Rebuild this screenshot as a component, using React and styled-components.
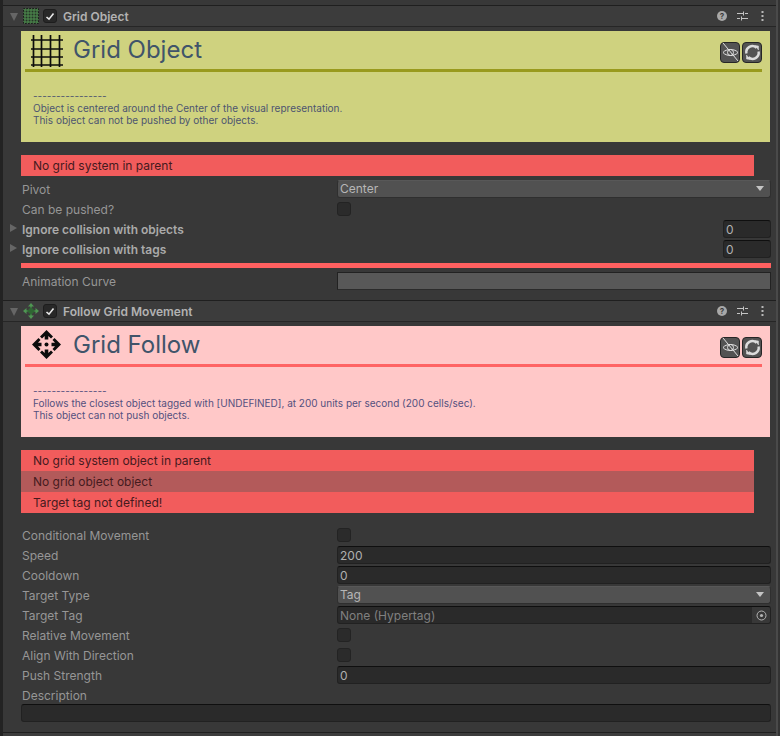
import React from "react";
import styled, { createGlobalStyle } from "styled-components";

const GlobalStyle = createGlobalStyle`
  html, body {
    margin: 0;
    background: #383838;
  }
  * {
    box-sizing: border-box;
  }
`;

const Page = styled.div`
  width: 780px;
  height: 736px;
  overflow: hidden;
  display: flex;
  background: #383838;
  font-family: Inter, "Noto Sans", sans-serif;
  font-size: 12px;
  color: #a6a6a6;
`;

const LeftEdge = styled.div`
  width: 3px;
  flex: none;
  background: #232323;
`;

const Inspector = styled.div`
  width: 773px;
  flex: none;
  padding-top: 5px;
`;

const ScrollEdge = styled.div`
  width: 4px;
  flex: none;
  display: flex;
  justify-content: flex-start;
  background: #333333;

  &::before {
    content: "";
    width: 2px;
    background: #4a4a4a;
  }
`;

const Header = styled.div`
  height: 22px;
  display: flex;
  align-items: center;
  padding-left: 7px;
  background: #3c3c3c;
  border-top: 1px solid #1f1f1f;
  border-bottom: 1px solid #262626;
`;

const Fold = styled.span`
  width: 0;
  height: 0;
  margin: 1px 5px 0 0;
  border-left: 4px solid transparent;
  border-right: 4px solid transparent;
  border-top: 8px solid #666666;
`;

const SmallIcon = styled.svg`
  width: 16px;
  height: 16px;
  margin-right: 4px;
`;

const Check = styled.span`
  width: 14px;
  height: 14px;
  flex: none;
  display: flex;
  align-items: center;
  justify-content: center;
  background: #282828;
  border: 1px solid #1d1d1d;
  border-radius: 3px;
`;

const HeaderTitle = styled.span`
  margin-left: 6px;
  font-weight: 600;
  color: #b2b2b2;
  flex: 1;
`;

const HeaderTools = styled.div`
  display: flex;
  align-items: center;
  gap: 10px;
  padding-right: 12px;
`;

const MenuSlot = styled.span`
  display: flex;
  margin-left: 3px;
`;

const Body = styled.div`
  padding: 4px 0 0 18px;
  height: ${({ $height }) => $height}px;
  display: flex;
  flex-direction: column;
`;

const Banner = styled.div`
  width: 749px;
  height: 111px;
  flex: none;
  padding: 0 8px 0 4px;
  background: ${({ $bg }) => $bg};
  color: ${({ $text }) => $text};
  font-size: 10px;
  line-height: 12px;
`;

const BannerTop = styled.div`
  height: 38px;
  display: flex;
  align-items: center;
`;

const BannerIcon = styled.svg`
  width: 34px;
  height: 34px;
  margin-left: 5px;
  flex: none;
`;

const BannerTitle = styled.div`
  margin-left: 9px;
  flex: 1;
  font-size: 24px;
  line-height: 38px;
  color: #40546a;
`;

const BannerButtons = styled.div`
  display: flex;
  gap: 2px;
  margin-top: 4px;
`;

const SquareButton = styled.div`
  width: 20px;
  height: 21px;
  display: flex;
  align-items: center;
  justify-content: center;
  background: #535353;
  border: 1px solid #262626;
  border-radius: 4px;
`;

const BannerRule = styled.div`
  height: 3px;
  background: ${({ $color }) => $color};
`;

const BannerText = styled.div`
  padding: 18px 0 0 8px;
`;

const Errors = styled.div`
  width: 733px;
  margin-top: 13px;
  flex: none;
  display: flex;
  flex-direction: column;
`;

const ErrorRow = styled.div`
  height: 21px;
  line-height: 21px;
  padding-left: 12px;
  color: #451a1e;
  background: ${({ $dim }) => ($dim ? "#b35a5a" : "#f25c5c")};
`;

const Fields = styled.div`
  width: 750px;
  margin-top: ${({ $top }) => $top}px;
  flex: none;
  display: flex;
  flex-direction: column;
`;

const Row = styled.div`
  height: 20px;
  display: flex;
  align-items: center;
  position: relative;
`;

const Label = styled.span`
  width: 316px;
  flex: none;
  padding-left: 1px;
  font-weight: ${({ $bold }) => ($bold ? 600 : 400)};
  color: ${({ $bold }) => ($bold ? "#aaaaaa" : "#969696")};
`;

const Arrow = styled.span`
  position: absolute;
  left: -11px;
  top: 5px;
  width: 0;
  height: 0;
  border-top: 4px solid transparent;
  border-bottom: 4px solid transparent;
  border-left: 7px solid #666666;
`;

const Control = styled.div`
  flex: 1;
  display: flex;
  justify-content: ${({ $end }) => ($end ? "flex-end" : "flex-start")};
`;

const Checkbox = styled.span`
  width: 14px;
  height: 14px;
  background: #2b2b2b;
  border: 1px solid #232323;
  border-radius: 3px;
`;

const Input = styled.div`
  width: ${({ $width }) => $width || "100%"};
  height: 18px;
  line-height: 17px;
  padding-left: 2px;
  display: flex;
  justify-content: space-between;
  background: #2a2a2a;
  border: 1px solid #212121;
  border-top-color: #0f0f0f;
  border-radius: 3px;
  color: ${({ $dim }) => ($dim ? "#808080" : "#b0b0b0")};
  overflow: hidden;
`;

const Picker = styled.span`
  width: 18px;
  margin: -1px 0;
  display: flex;
  align-items: center;
  justify-content: center;
  background: #383838;
`;

const Select = styled.div`
  width: 100%;
  height: 18px;
  line-height: 15px;
  padding: 0 6px 1px 2px;
  display: flex;
  align-items: center;
  justify-content: space-between;
  background: #515151;
  border: 1px solid #2f2f2f;
  border-top-color: #585858;
  border-radius: 3px;
  color: #b6b6b6;
`;

const Caret = styled.span`
  width: 0;
  height: 0;
  border-left: 4px solid transparent;
  border-right: 4px solid transparent;
  border-top: 5px solid #c4c4c4;
`;

const RedRule = styled.div`
  width: 750px;
  height: 5px;
  margin-top: 4px;
  flex: none;
  background: #ff6060;
`;

const CurveBox = styled.div`
  width: 100%;
  height: 18px;
  background: #585858;
  border: 1px solid #222222;
  border-bottom-color: #2b2b2b;
`;

const WideInput = styled(Input)`
  width: 750px;
  margin-top: -1px;
  flex: none;
`;

const HelpIcon = () => (
  <svg width="10" height="10" viewBox="0 0 10 10">
    <circle cx="5" cy="5" r="5" fill="#a8a8a8" />
    <text x="5" y="8" textAnchor="middle" fontSize="8" fontWeight="700" fontFamily="Inter" fill="#3c3c3c">?</text>
  </svg>
);

const PresetIcon = () => (
  <svg width="11" height="10" viewBox="0 0 11 10" stroke="#c4c4c4" strokeWidth="1" fill="none">
    <path d="M0 2.5H6M8 2.5H11M0 7.5H3M5 7.5H11M6.5 0.5V4.5M4.5 5.5V9.5" />
  </svg>
);

const MenuIcon = () => (
  <svg width="3" height="10" viewBox="0 0 3 10" fill="#b8b8b8">
    <rect x="0.5" y="0" width="2" height="2" />
    <rect x="0.5" y="4" width="2" height="2" />
    <rect x="0.5" y="8" width="2" height="2" />
  </svg>
);

const Tick = () => (
  <svg width="10" height="9" viewBox="0 0 10 9" fill="none" stroke="#e8e8e8" strokeWidth="1.6">
    <path d="M1.5 5L4 7.2L8.5 1.5" />
  </svg>
);

const GridTiny = () => (
  <SmallIcon viewBox="0 0 16 16">
    <rect x="0.5" y="0.5" width="15" height="15" fill="#263327" />
    <path d="M0 2H16M0 5H16M0 8H16M0 11H16M0 14H16M2 0V16M5 0V16M8 0V16M11 0V16M14 0V16" stroke="#4e8f50" strokeWidth="1" />
    <path d="M0.5 0.5H15.5V15.5H0.5Z" fill="none" stroke="#1c1c1c" strokeWidth="1" strokeDasharray="1.5 1.5" />
  </SmallIcon>
);

const MoveTiny = () => (
  <SmallIcon viewBox="0 0 16 16">
    <path d="M8 1V15M1 8H15" stroke="#4a8f4e" strokeWidth="1.6" />
    <path d="M8 0L11 3.5H5ZM8 16L11 12.5H5ZM0 8L3.5 5V11ZM16 8L12.5 5V11Z" fill="#4f9653" />
    <path d="M8 4L12 8L8 12L4 8Z" fill="#2f6633" />
  </SmallIcon>
);

const GridLarge = () => (
  <BannerIcon viewBox="0 0 34 34" fill="none" stroke="#0c0c0c" strokeWidth="1.7">
    <path d="M1 7H33M1 16H33M1 24H33M1 32H33M3.5 2V34M11.5 2V34M20.5 2V34M29.5 2V34" />
  </BannerIcon>
);

const MoveLarge = () => (
  <BannerIcon viewBox="0 0 34 34" fill="#0c0c0c">
    <circle cx="16.5" cy="16.5" r="2" />
    <path d="M16.5 2L23 8.5L21 10.5L18.3 8V11.5H14.7V8L12 10.5L10 8.5Z" />
    <path d="M16.5 31L23 24.5L21 22.5L18.3 25V21.5H14.7V25L12 22.5L10 24.5Z" />
    <path d="M2 16.5L8.5 10L10.5 12L8 14.7H11.5V18.3H8L10.5 21L8.5 23Z" />
    <path d="M31 16.5L24.5 10L22.5 12L25 14.7H21.5V18.3H25L22.5 21L24.5 23Z" />
  </BannerIcon>
);

const HideSvg = styled.svg`
  overflow: visible;
`;

const HideIcon = () => (
  <HideSvg width="17" height="17" viewBox="0 0 17 17" fill="none" stroke="#e2e2e2" strokeWidth="1">
    <path d="M1 8.5C4 4.5 13 4.5 16 8.5C13 12.5 4 12.5 1 8.5Z" />
    <circle cx="8.5" cy="8.5" r="3" />
    <path d="M1 -1L16 17" />
  </HideSvg>
);

const RefreshIcon = () => (
  <svg width="17" height="17" viewBox="0 0 17 17" fill="none" stroke="#dcdcdc" strokeWidth="2.4">
    <path d="M2.5 9.5A6 6 0 0 1 12.5 3.8" />
    <path d="M14.5 7.5A6 6 0 0 1 4.5 13.2" />
    <path d="M11 1.5L14.5 2V6ZM6 15.5L2.5 15V11Z" fill="#dcdcdc" strokeWidth="0.5" />
  </svg>
);

const TargetIcon = () => (
  <svg width="11" height="11" viewBox="0 0 11 11" fill="none" stroke="#b4b4b4">
    <circle cx="5.5" cy="5.5" r="4.5" />
    <circle cx="5.5" cy="5.5" r="1.6" fill="#b4b4b4" stroke="none" />
  </svg>
);

const ComponentHeader = ({ icon, title }) => (
  <Header>
    <Fold />
    {icon}
    <Check>
      <Tick />
    </Check>
    <HeaderTitle>{title}</HeaderTitle>
    <HeaderTools>
      <HelpIcon />
      <PresetIcon />
      <MenuSlot>
        <MenuIcon />
      </MenuSlot>
    </HeaderTools>
  </Header>
);

const InfoBanner = ({ bg, rule, text, icon, title, lines }) => (
  <Banner $bg={bg} $text={text}>
    <BannerTop>
      {icon}
      <BannerTitle>{title}</BannerTitle>
      <BannerButtons>
        <SquareButton>
          <HideIcon />
        </SquareButton>
        <SquareButton>
          <RefreshIcon />
        </SquareButton>
      </BannerButtons>
    </BannerTop>
    <BannerRule $color={rule} />
    <BannerText>
      <div>----------------</div>
      {lines.map((line) => (
        <div key={line}>{line}</div>
      ))}
    </BannerText>
  </Banner>
);

const Field = ({ label, bold, children, end }) => (
  <Row>
    {bold && <Arrow />}
    <Label $bold={bold}>{label}</Label>
    <Control $end={end}>{children}</Control>
  </Row>
);

const App = () => {
  return (
    <Page>
      <GlobalStyle />
      <LeftEdge />
      <Inspector>
        <ComponentHeader icon={<GridTiny />} title="Grid Object" />
        <Body $height={273}>
          <InfoBanner
            bg="#cfd27f"
            rule="#999a1e"
            text="#4d5570"
            icon={<GridLarge />}
            title="Grid Object"
            lines={[
              "Object is centered around the Center of the visual representation.",
              "This object can not be pushed by other objects.",
            ]}
          />
          <Errors>
            <ErrorRow>No grid system in parent</ErrorRow>
          </Errors>
          <Fields $top={3}>
            <Field label="Pivot">
              <Select>
                Center
                <Caret />
              </Select>
            </Field>
            <Field label="Can be pushed?">
              <Checkbox />
            </Field>
            <Field label="Ignore collision with objects" bold end>
              <Input $width="48px">0</Input>
            </Field>
            <Field label="Ignore collision with tags" bold end>
              <Input $width="48px">0</Input>
            </Field>
          </Fields>
          <RedRule />
          <Fields $top={3}>
            <Field label="Animation Curve">
              <CurveBox />
            </Field>
          </Fields>
        </Body>
        <ComponentHeader icon={<MoveTiny />} title="Follow Grid Movement" />
        <Body $height={410}>
          <InfoBanner
            bg="#ffc8c8"
            rule="#ff6464"
            text="#54507e"
            icon={<MoveLarge />}
            title="Grid Follow"
            lines={[
              "Follows the closest object tagged with [UNDEFINED], at 200 units per second (200 cells/sec).",
              "This object can not push objects.",
            ]}
          />
          <Errors>
            <ErrorRow>No grid system object in parent</ErrorRow>
            <ErrorRow $dim>No grid object object</ErrorRow>
            <ErrorRow>Target tag not defined!</ErrorRow>
          </Errors>
          <Fields $top={12}>
            <Field label="Conditional Movement">
              <Checkbox />
            </Field>
            <Field label="Speed">
              <Input>200</Input>
            </Field>
            <Field label="Cooldown">
              <Input>0</Input>
            </Field>
            <Field label="Target Type">
              <Select>
                Tag
                <Caret />
              </Select>
            </Field>
            <Field label="Target Tag">
              <Input $dim>
                None (Hypertag)
                <Picker>
                  <TargetIcon />
                </Picker>
              </Input>
            </Field>
            <Field label="Relative Movement">
              <Checkbox />
            </Field>
            <Field label="Align With Direction">
              <Checkbox />
            </Field>
            <Field label="Push Strength">
              <Input>0</Input>
            </Field>
            <Field label="Description" />
          </Fields>
          <WideInput />
        </Body>
        <Header />
      </Inspector>
      <ScrollEdge />
    </Page>
  );
};

export default App;
